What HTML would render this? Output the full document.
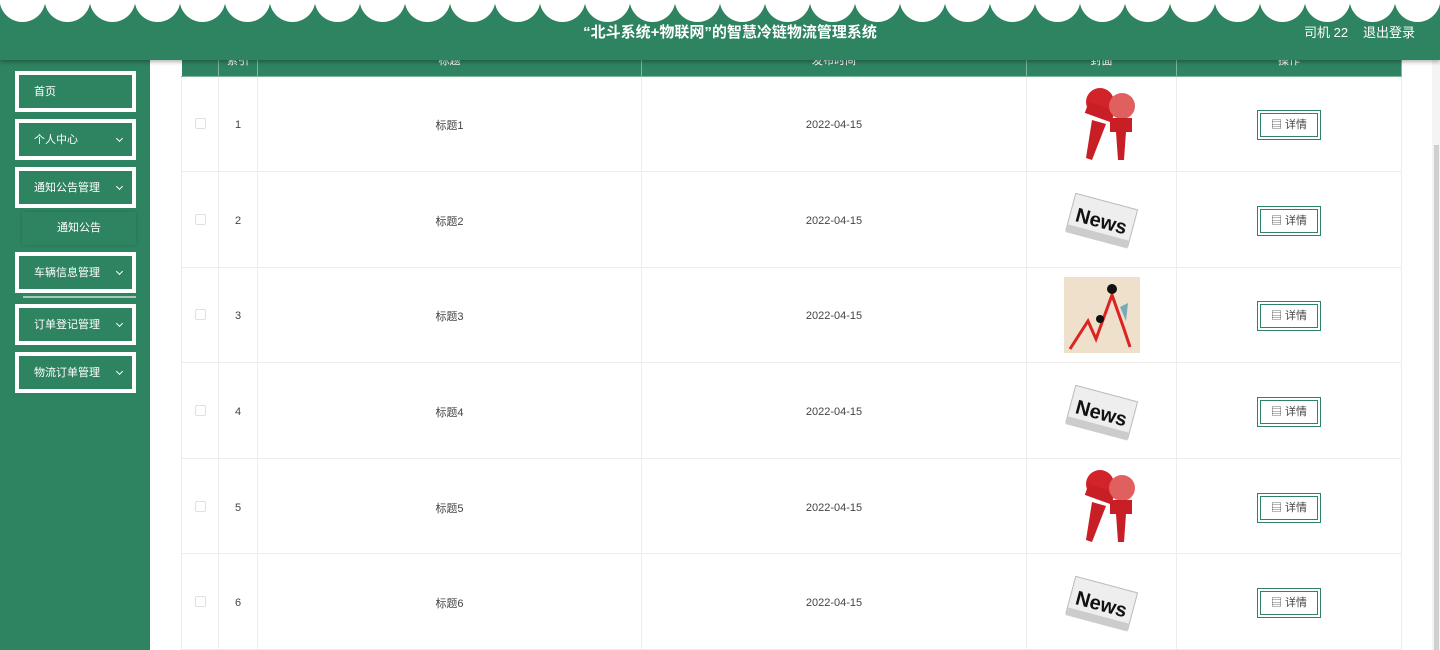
<!DOCTYPE html>
<html><head><meta charset="utf-8"><style>
*{margin:0;padding:0;box-sizing:border-box}
body{width:1440px;height:650px;overflow:hidden;background:#fff;font-family:"Liberation Sans","Noto Sans CJK SC",sans-serif;position:relative}
.hdr{position:absolute;left:0;top:0;width:1440px;height:60px;background:#2e8361;box-shadow:0 2px 4px rgba(0,0,0,.3);z-index:5;overflow:hidden}
.hdr .t{position:absolute;left:0;width:1460px;top:21px;text-align:center;color:#fff;font-size:15px;font-weight:bold}
.hdr .u{position:absolute;top:22px;color:#fff;font-size:13px}
.side{position:absolute;left:0;top:60px;width:150px;height:590px;background:#2e8361}
.mi{position:absolute;left:15px;width:121px;height:41px;border:4px solid #fff;color:#fff;font-size:11px;line-height:35px;padding-left:15px}
.mi i{position:absolute;right:10px;top:13px;width:5px;height:5px;border-right:1px solid #fff;border-bottom:1px solid #fff;transform:rotate(45deg)}
.sub{position:absolute;left:22px;top:212px;width:114px;height:33px;color:#fff;font-size:11px;line-height:33px;text-align:center;box-shadow:0 0 3px rgba(0,0,0,.15)}
table{position:absolute;left:181px;top:45px;width:1221px;border-collapse:collapse;font-size:11px;color:#444}
th{height:31px;background:#2e8361;color:#fff;font-weight:normal;border-right:1px solid #7fb59c;border-bottom:1px solid #7fb59c}
td{height:95.6px;text-align:center;border:1px solid #f0ecec;padding-top:3px}
.cb{display:inline-block;width:11px;height:11px;border:1px solid #e0e0e0;border-radius:2px}
.btn{display:inline-block;width:64px;height:30px;border:1px solid #2e8361;padding:2px}
.btn span{display:block;height:24px;border:1px solid #2e8361;line-height:22px;font-size:11px;color:#444}
.sb{position:absolute;right:0;top:60px;width:8px;height:590px;background:#f4f4f4}
.sb div{position:absolute;left:2px;top:85px;width:5px;height:505px;background:#cfcfcf}
</style></head><body>
<svg width="0" height="0" style="position:absolute"><defs>
<symbol id="mic" viewBox="0 0 80 80"><circle cx="38" cy="18" r="14" fill="#d2232a"/><rect x="24" y="22" width="28" height="12" fill="#c81f26" transform="rotate(20 38 28)"/><path d="M30 36 L44 40 L30 76 L24 74Z" fill="#c81f26"/><circle cx="60" cy="22" r="13" fill="#e06060"/><rect x="48" y="34" width="22" height="14" fill="#c81f26"/><path d="M54 48 L64 48 L62 76 L56 76Z" fill="#c81f26"/></symbol>
<symbol id="news" viewBox="0 0 80 60"><g transform="rotate(15 40 30)"><rect x="8" y="12" width="64" height="38" fill="#eee" stroke="#bbb"/><rect x="8" y="44" width="64" height="8" fill="#ccc"/><text x="40" y="39" font-size="20" font-weight="bold" text-anchor="middle" font-family="Liberation Sans" fill="#111">News</text></g></symbol>
<symbol id="chart" viewBox="0 0 76 76"><rect width="76" height="76" fill="#efe0cc"/><path d="M6 72 L24 44 L32 62 L48 18 L60 52 L66 70" stroke="#d22" stroke-width="3" fill="none"/><circle cx="48" cy="12" r="5" fill="#111"/><circle cx="36" cy="42" r="4" fill="#111"/><path d="M56 30 L64 26 L62 44Z" fill="#7ab"/></symbol>
</defs></svg>
<div class="hdr">
<svg width="1440" height="30" style="position:absolute;left:0;top:0">
<g fill="#fff" transform="translate(22.5 0)">
<circle cx="-45" cy="-1" r="23"/><circle cx="0" cy="-1" r="23"/><circle cx="45" cy="-1" r="23"/><circle cx="90" cy="-1" r="23"/><circle cx="135" cy="-1" r="23"/><circle cx="180" cy="-1" r="23"/><circle cx="225" cy="-1" r="23"/><circle cx="270" cy="-1" r="23"/><circle cx="315" cy="-1" r="23"/><circle cx="360" cy="-1" r="23"/><circle cx="405" cy="-1" r="23"/><circle cx="450" cy="-1" r="23"/><circle cx="495" cy="-1" r="23"/><circle cx="540" cy="-1" r="23"/><circle cx="585" cy="-1" r="23"/><circle cx="630" cy="-1" r="23"/><circle cx="675" cy="-1" r="23"/><circle cx="720" cy="-1" r="23"/><circle cx="765" cy="-1" r="23"/><circle cx="810" cy="-1" r="23"/><circle cx="855" cy="-1" r="23"/><circle cx="900" cy="-1" r="23"/><circle cx="945" cy="-1" r="23"/><circle cx="990" cy="-1" r="23"/><circle cx="1035" cy="-1" r="23"/><circle cx="1080" cy="-1" r="23"/><circle cx="1125" cy="-1" r="23"/><circle cx="1170" cy="-1" r="23"/><circle cx="1215" cy="-1" r="23"/><circle cx="1260" cy="-1" r="23"/><circle cx="1305" cy="-1" r="23"/><circle cx="1350" cy="-1" r="23"/><circle cx="1395" cy="-1" r="23"/><circle cx="1440" cy="-1" r="23"/>
</g></svg>
<div class="t">“北斗系统+物联网”的智慧冷链物流管理系统</div>
<div class="u" style="left:1304px">司机 22</div>
<div class="u" style="left:1363px">退出登录</div>
</div>
<div class="side"></div>
<div class="mi" style="top:71px">首页</div>
<div class="mi" style="top:119px">个人中心<i></i></div>
<div class="mi" style="top:167px">通知公告管理<i></i></div>
<div class="sub">通知公告</div>
<div class="mi" style="top:252px">车辆信息管理<i></i></div>
<div style="position:absolute;left:23px;top:296px;width:113px;height:2px;background:#a9c9b8"></div>
<div class="mi" style="top:304px">订单登记管理<i></i></div>
<div class="mi" style="top:352px">物流订单管理<i></i></div>
<table>
<tr><th style="width:37px"></th><th style="width:39px">索引</th><th style="width:384px">标题</th><th style="width:385px">发布时间</th><th style="width:150px">封面</th><th>操作</th></tr>
<tr><td><span class="cb"></span></td><td>1</td><td>标题1</td><td>2022-04-15</td><td><svg width="80" height="80"><use href="#mic"/></svg></td><td><span class="btn"><span>▤ 详情</span></span></td></tr>
<tr><td><span class="cb"></span></td><td>2</td><td>标题2</td><td>2022-04-15</td><td><svg width="80" height="60"><use href="#news"/></svg></td><td><span class="btn"><span>▤ 详情</span></span></td></tr>
<tr><td><span class="cb"></span></td><td>3</td><td>标题3</td><td>2022-04-15</td><td><svg width="76" height="76"><use href="#chart"/></svg></td><td><span class="btn"><span>▤ 详情</span></span></td></tr>
<tr><td><span class="cb"></span></td><td>4</td><td>标题4</td><td>2022-04-15</td><td><svg width="80" height="60"><use href="#news"/></svg></td><td><span class="btn"><span>▤ 详情</span></span></td></tr>
<tr><td><span class="cb"></span></td><td>5</td><td>标题5</td><td>2022-04-15</td><td><svg width="80" height="80"><use href="#mic"/></svg></td><td><span class="btn"><span>▤ 详情</span></span></td></tr>
<tr><td><span class="cb"></span></td><td>6</td><td>标题6</td><td>2022-04-15</td><td><svg width="80" height="60"><use href="#news"/></svg></td><td><span class="btn"><span>▤ 详情</span></span></td></tr>
</table>
<div class="sb"><div></div></div>
</body></html>
